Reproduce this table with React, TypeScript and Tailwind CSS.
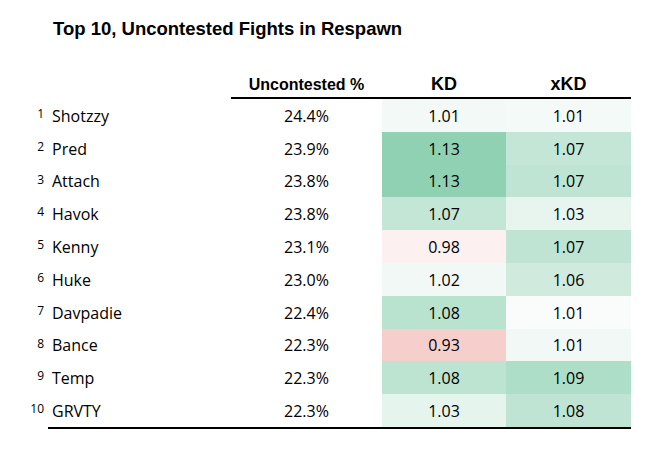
const rows = [
  { rank: 1, name: 'Shotzzy', pct: '24.4%', kd: '1.01', kdBg: 'bg-[#f3f9f6]', xkd: '1.01', xkdBg: 'bg-[#f4faf7]' },
  { rank: 2, name: 'Pred', pct: '23.9%', kd: '1.13', kdBg: 'bg-[#90d1b3]', xkd: '1.07', xkdBg: 'bg-[#c4e6d6]' },
  { rank: 3, name: 'Attach', pct: '23.8%', kd: '1.13', kdBg: 'bg-[#90d1b3]', xkd: '1.07', xkdBg: 'bg-[#bfe4d3]' },
  { rank: 4, name: 'Havok', pct: '23.8%', kd: '1.07', kdBg: 'bg-[#c4e6d6]', xkd: '1.03', xkdBg: 'bg-[#e8f5ef]' },
  { rank: 5, name: 'Kenny', pct: '23.1%', kd: '0.98', kdBg: 'bg-[#fcf1f0]', xkd: '1.07', xkdBg: 'bg-[#bfe4d3]' },
  { rank: 6, name: 'Huke', pct: '23.0%', kd: '1.02', kdBg: 'bg-[#f2f8f5]', xkd: '1.06', xkdBg: 'bg-[#d0ebde]' },
  { rank: 7, name: 'Davpadie', pct: '22.4%', kd: '1.08', kdBg: 'bg-[#b9e2cf]', xkd: '1.01', xkdBg: 'bg-[#f9fcfb]' },
  { rank: 8, name: 'Bance', pct: '22.3%', kd: '0.93', kdBg: 'bg-[#f6cfcc]', xkd: '1.01', xkdBg: 'bg-[#f2f8f5]' },
  { rank: 9, name: 'Temp', pct: '22.3%', kd: '1.08', kdBg: 'bg-[#bde3d1]', xkd: '1.09', xkdBg: 'bg-[#addec7]' },
  { rank: 10, name: 'GRVTY', pct: '22.3%', kd: '1.03', kdBg: 'bg-[#e6f4ee]', xkd: '1.08', xkdBg: 'bg-[#c0e4d3]' },
]

export default function App() {
  return (
    <div className="w-[665px] h-[452px] bg-white text-black overflow-hidden">
      <h1 className="h-[39px] pl-[53px] pt-[20px] text-[18.5px] leading-[18.5px] font-bold font-['Liberation_Sans',Arial,sans-serif]">
        Top 10, Uncontested Fights in Respawn
      </h1>

      <div className="ml-[48px] w-[583px] grid grid-cols-[183px_151px_124px_125px] h-[60px] font-['Liberation_Sans',Arial,sans-serif] font-bold">
        <div />
        <div className="flex items-end justify-center border-b-2 border-black pb-[4.5px] text-[16px] leading-none">
          Uncontested %
        </div>
        <div className="flex items-end justify-center border-b-2 border-black pb-[4px] text-[18px] leading-none">
          KD
        </div>
        <div className="flex items-end justify-center border-b-2 border-black pb-[4px] text-[18px] leading-none">
          xKD
        </div>
      </div>

      <div className="font-['Open_Sans',sans-serif]">
        {rows.map((r) => (
          <div key={r.rank} className="flex h-[32.8px]">
            <span className="w-[48px] pr-[4px] pt-[9px] text-right text-[12px] leading-none">{r.rank}</span>
            <div className="w-[583px] grid grid-cols-[183px_151px_124px_125px] text-[16px]">
              <div className="flex items-center pl-[4px] pt-[1px]">{r.name}</div>
              <div className="flex items-center justify-center pt-[1px]">{r.pct}</div>
              <div className={`flex items-center justify-center pt-[1px] ${r.kdBg}`}>{r.kd}</div>
              <div className={`flex items-center justify-center pt-[1px] ${r.xkdBg}`}>{r.xkd}</div>
            </div>
          </div>
        ))}
        <div className="ml-[48px] w-[583px] h-[2px] bg-black" />
      </div>
    </div>
  )
}
